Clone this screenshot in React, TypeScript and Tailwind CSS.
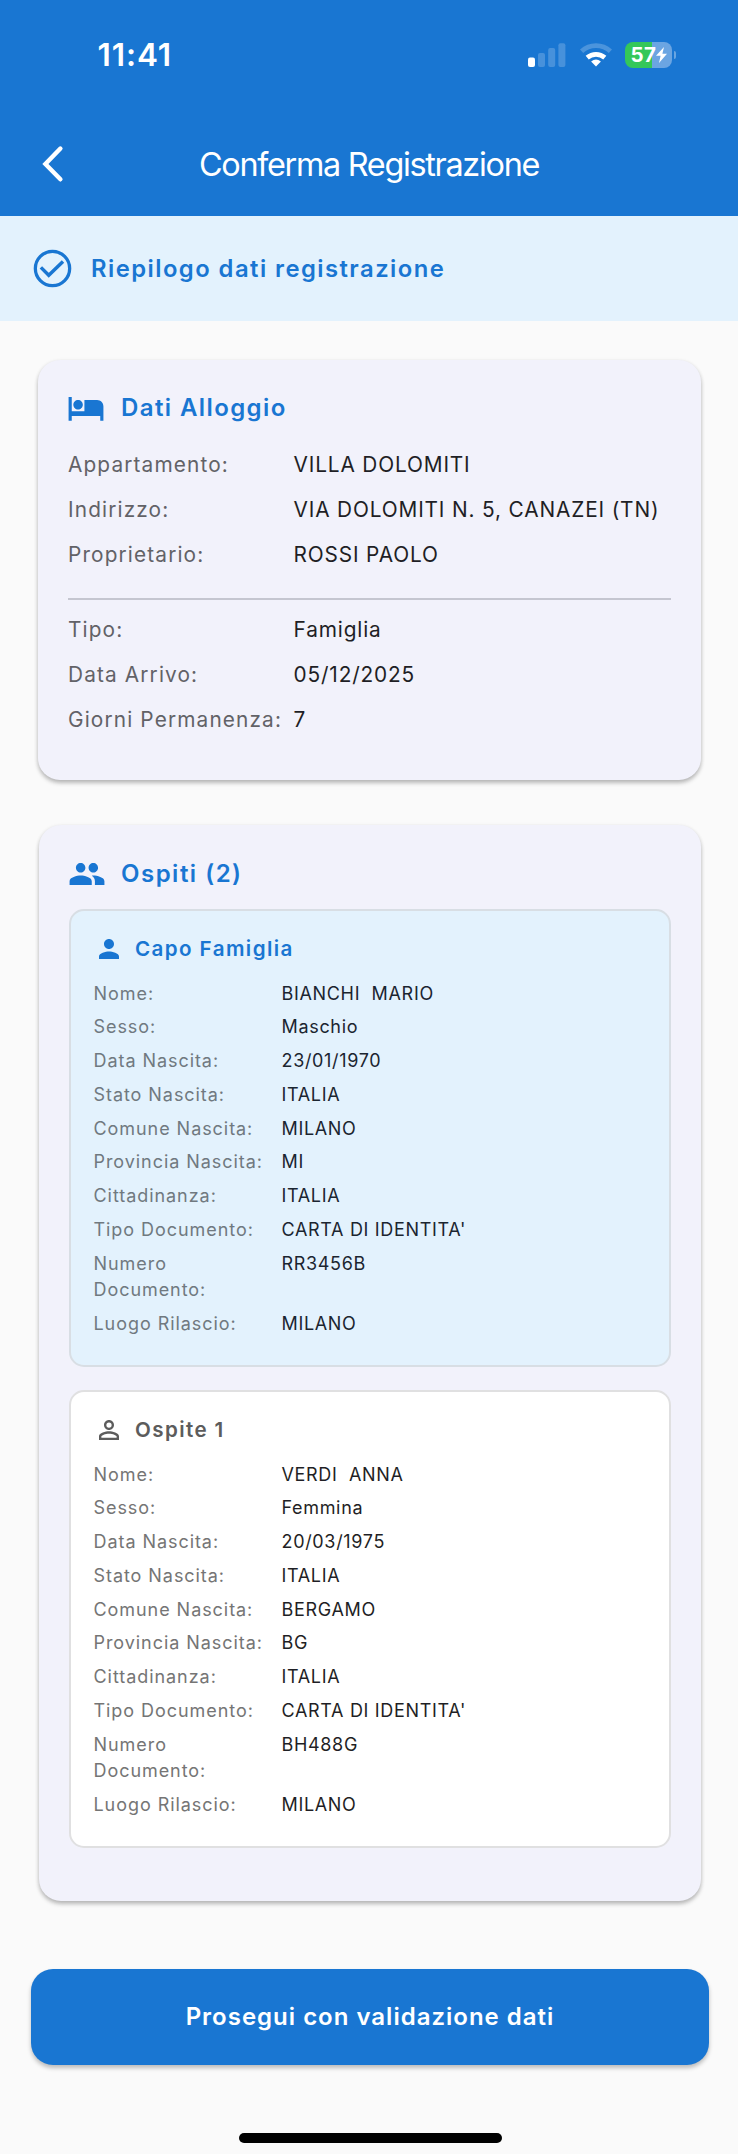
import React from "react";
import { MdHotel, MdPeople, MdPerson, MdPersonOutline } from "react-icons/md";

type Field = [label: string, value: string];

const stay: Field[] = [
  ["Appartamento:", "VILLA DOLOMITI"],
  ["Indirizzo:", "VIA DOLOMITI N. 5, CANAZEI (TN)"],
  ["Proprietario:", "ROSSI PAOLO"],
];

const period: Field[] = [
  ["Tipo:", "Famiglia"],
  ["Data Arrivo:", "05/12/2025"],
  ["Giorni Permanenza:", "7"],
];

const head: Field[] = [
  ["Nome:", "BIANCHI  MARIO"],
  ["Sesso:", "Maschio"],
  ["Data Nascita:", "23/01/1970"],
  ["Stato Nascita:", "ITALIA"],
  ["Comune Nascita:", "MILANO"],
  ["Provincia Nascita:", "MI"],
  ["Cittadinanza:", "ITALIA"],
  ["Tipo Documento:", "CARTA DI IDENTITA'"],
  ["Numero Documento:", "RR3456B"],
  ["Luogo Rilascio:", "MILANO"],
];

const guest: Field[] = [
  ["Nome:", "VERDI  ANNA"],
  ["Sesso:", "Femmina"],
  ["Data Nascita:", "20/03/1975"],
  ["Stato Nascita:", "ITALIA"],
  ["Comune Nascita:", "BERGAMO"],
  ["Provincia Nascita:", "BG"],
  ["Cittadinanza:", "ITALIA"],
  ["Tipo Documento:", "CARTA DI IDENTITA'"],
  ["Numero Documento:", "BH488G"],
  ["Luogo Rilascio:", "MILANO"],
];

function Signal() {
  return (
    <svg width="38" height="24" viewBox="0 0 38 24" fill="#fff">
      <rect x="0" y="14.5" width="7" height="9.5" rx="2" />
      <g opacity="0.2">
        <rect x="10" y="10" width="7" height="14" rx="2" />
        <rect x="20.2" y="5" width="7" height="19" rx="2" />
        <rect x="30.4" y="0.3" width="7" height="23.7" rx="2" />
      </g>
    </svg>
  );
}

function Wifi() {
  return (
    <svg width="32" height="24" viewBox="0 0 32 24" fill="none" stroke="#fff">
      <path d="M1.6 8.3A21.3 21.3 0 0 1 30.4 8.3" strokeWidth="4.8" opacity="0.22" />
      <path d="M7.2 14.6A13.6 13.6 0 0 1 24.8 14.6" strokeWidth="4.8" />
      <path d="M16 23.6L11.1 18.5Q16 14.7 20.9 18.5Z" fill="#fff" stroke="none" />
    </svg>
  );
}

function Battery() {
  return (
    <div className="flex items-center gap-[2px]">
      <div className="flex h-[26px] w-[47px] items-center overflow-hidden rounded-[8px] bg-[linear-gradient(90deg,#34c759_58%,#6ba5e2_58%)] pl-[5.5px]">
        <span className="text-[20.5px] font-bold leading-none tracking-[0.3px]">57</span>
        <svg width="11" height="16" viewBox="0 0 11 16" fill="#fff">
          <path d="M8 0L0 8.8h4.6L3 16l8-9.2H6.4z" />
        </svg>
      </div>
      <div className="h-[8px] w-[2px] rounded-r-full bg-white/35" />
    </div>
  );
}

function StayRow({ field: [label, value] }: { field: Field }) {
  return (
    <div className="flex pb-[15px] text-[20.8px] leading-[30.1px]">
      <span className="w-[225.5px] shrink-0 whitespace-nowrap tracking-[1.14px] text-[#626267]">{label}</span>
      <span className="whitespace-nowrap tracking-[0.86px] text-[#1f1f25]">{value}</span>
    </div>
  );
}

function GuestCard({ title, icon, fields, primary }: { title: string; icon: React.ReactNode; fields: Field[]; primary?: boolean }) {
  return (
    <div
      className={
        primary
          ? "h-[458px] rounded-[15px] border-2 border-[#d8dee4] bg-[#e3f2fd] px-[22.5px] pt-[24.5px]"
          : "h-[458px] rounded-[15px] border-2 border-[#e0e0e1] bg-white px-[22.5px] pt-[24.5px]"
      }
    >
      <div className={primary ? "flex h-[27px] items-center text-[#1976d2]" : "flex h-[27px] items-center text-[#5c5c5c]"}>
        {icon}
        <h3 className="ml-[11.5px] text-[20.6px] font-semibold tracking-[1.4px]">{title}</h3>
      </div>
      <div className="mt-[18px]">
        {fields.map(([label, value]) => (
          <div key={label} className="flex pb-[7.2px] text-[18px] leading-[26.6px]">
            <span className={primary ? "mr-[14px] w-[174px] shrink-0 tracking-[0.94px] text-[#707980]" : "mr-[14px] w-[174px] shrink-0 tracking-[0.94px] text-[#757575]"}>{label}</span>
            <span className={primary ? "whitespace-pre tracking-[0.67px] text-[#1b2530]" : "whitespace-pre tracking-[0.67px] text-[#1f1f25]"}>{value}</span>
          </div>
        ))}
      </div>
    </div>
  );
}

export default function App() {
  return (
    <div className="flex h-[2154px] w-[738px] flex-col bg-[#fafafa] font-['Inter',sans-serif]">
      <header className="h-[216px] bg-[#1976d2] text-white">
        <div className="flex h-[110px] items-center justify-between pl-[97.5px] pr-[62px]">
          <span className="text-[31.5px] font-semibold tracking-[0.9px]">11:41</span>
          <div className="flex items-center gap-[13.5px]">
            <Signal />
            <Wifi />
            <Battery />
          </div>
        </div>
        <div className="grid h-[107px] grid-cols-[100px_1fr_100px] items-center">
          <svg width="24" height="40" viewBox="0 0 24 40" fill="none" stroke="#fff" strokeWidth="4.4" strokeLinecap="round" className="ml-[40px]">
            <path d="M20.4 4.5L5.4 20L20.4 35.3" />
          </svg>
          <h1 className="whitespace-nowrap pt-[3px] text-center text-[32.4px] font-normal leading-none tracking-[-1.3px]">Conferma Registrazione</h1>
        </div>
      </header>

      <div className="flex h-[105px] items-center bg-[#e3f2fd] pl-[30px] text-[#1976d2]">
        <svg width="45" height="45" viewBox="0 0 24 24" fill="none" stroke="currentColor">
          <circle cx="12" cy="12" r="9.15" strokeWidth="1.75" />
          <path d="M5.8 11.4L10 15.6L17.6 8.3" strokeWidth="1.85" />
        </svg>
        <h2 className="ml-[16px] text-[23.8px] font-semibold tracking-[1.46px]">Riepilogo dati registrazione</h2>
      </div>

      <section className="ml-[38px] mt-[39px] h-[419.5px] w-[662.5px] rounded-[22px] bg-[#f2f2fb] px-[30px] pt-[29px] shadow-[0_3px_4px_rgba(0,0,0,0.24),0_1px_4px_rgba(0,0,0,0.08)]">
        <div className="flex h-[37px] items-center text-[#1976d2]">
          <MdHotel size={38} className="-ml-[1px]" />
          <h2 className="ml-[16px] text-[24px] font-semibold tracking-[1.4px]">Dati Alloggio</h2>
        </div>
        <div className="mt-[23.7px]">
          {stay.map((f) => (
            <StayRow key={f[0]} field={f} />
          ))}
        </div>
        <hr className="mb-[14.5px] mt-[13.3px] border-t-2 border-[#c5c6d0]" />
        {period.map((f) => (
          <StayRow key={f[0]} field={f} />
        ))}
      </section>

      <section className="ml-[38.5px] mt-[45.5px] h-[1076px] w-[662.5px] rounded-[22px] bg-[#f2f2fb] px-[30.5px] pt-[30px] shadow-[0_3px_4px_rgba(0,0,0,0.24),0_1px_4px_rgba(0,0,0,0.08)]">
        <div className="flex h-[37px] items-center text-[#1976d2]">
          <MdPeople size={38} className="-ml-[1.5px]" />
          <h2 className="ml-[15.5px] text-[24px] font-semibold tracking-[1.5px]">Ospiti (2)</h2>
        </div>
        <div className="mt-[17px] flex flex-col gap-[23px]">
          <GuestCard primary title="Capo Famiglia" icon={<MdPerson size={30} />} fields={head} />
          <GuestCard title="Ospite 1" icon={<MdPersonOutline size={30} />} fields={guest} />
        </div>
      </section>

      <button className="ml-[31px] mt-[67.5px] h-[96px] w-[678px] rounded-[22px] bg-[#1976d2] text-[24px] font-semibold tracking-[1px] text-white shadow-[0_3px_4px_rgba(0,0,0,0.25)]">
        Prosegui con validazione dati
      </button>
      <div className="ml-[239px] mt-[68.5px] h-[10px] w-[263px] rounded-full bg-black" />
    </div>
  );
}
